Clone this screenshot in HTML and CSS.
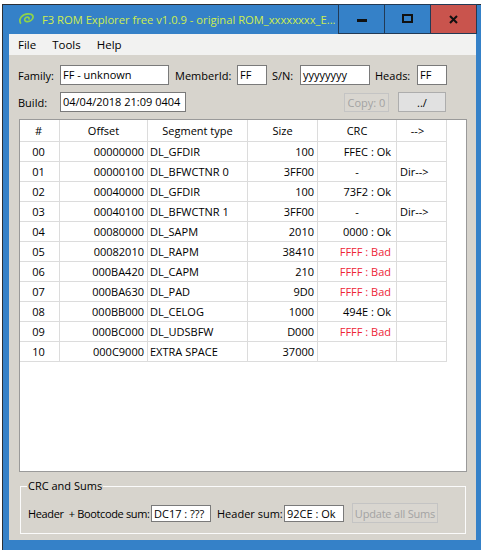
FILE: index.html
```html
<!DOCTYPE html>
<html>
<head>
<meta charset="utf-8">
<link rel="stylesheet" href="styles.css">
</head>
<body>
<div class="window">
  <div class="titlebar">
    <div class="title">
      <svg class="appicon" width="18" height="14" viewBox="0 0 18 14">
        <path d="M2.5 11 C0.5 7 4 2 10 1.8 C15 1.7 16.5 5 13.5 8 C10.5 10.8 5.5 10 7 6.5 C8 4.5 11.5 4.6 11 7" fill="none" stroke="#8fd34a" stroke-width="1.7" stroke-linecap="round"/>
      </svg>
      <span class="title-text">F3 ROM Explorer free v1.0.9 - original ROM_xxxxxxxx_E...</span>
    </div>
    <div class="caption">
      <div class="cbtn"><span class="ic-min"></span></div>
      <div class="cbtn"><span class="ic-max"></span></div>
      <div class="cbtn close">
        <svg width="9" height="9" viewBox="0 0 9 9"><path d="M1 1 L8 8 M8 1 L1 8" stroke="#111" stroke-width="2"/></svg>
      </div>
    </div>
  </div>
  <div class="body">
    <div class="client">
      <div class="menubar">
        <span class="menu-item">File</span>
        <span class="menu-item">Tools</span>
        <span class="menu-item">Help</span>
      </div>
      <div class="content">
        <div class="row">
          <span class="lbl w-family">Family:</span>
          <span class="field w108">FF - unknown</span>
          <span class="lbl w-member">MemberId:</span>
          <span class="field w29">FF</span>
          <span class="lbl w-sn">S/N:</span>
          <span class="field w69">yyyyyyyy</span>
          <span class="lbl w-heads">Heads:</span>
          <span class="field w29">FF</span>
        </div>
        <div class="row">
          <span class="lbl w-family">Build:</span>
          <span class="field w125">04/04/2018 21:09 0404</span>
          <span class="spacer"></span>
          <span class="btn disabled w44">Copy: 0</span>
          <span class="btn w47">../</span>
        </div>
        <div class="grid-box">
          <div class="grow head">
            <div class="c c-num">#</div>
            <div class="c c-off center">Offset</div>
            <div class="c c-seg center">Segment type</div>
            <div class="c c-size center">Size</div>
            <div class="c c-crc center">CRC</div>
            <div class="c c-dir center">--&gt;</div>
          </div>
          <div class="grow"><div class="c c-num">00</div><div class="c c-off">00000000</div><div class="c c-seg">DL_GFDIR</div><div class="c c-size">100</div><div class="c c-crc">FFEC : Ok</div><div class="c c-dir"></div></div>
          <div class="grow"><div class="c c-num">01</div><div class="c c-off">00000100</div><div class="c c-seg">DL_BFWCTNR 0</div><div class="c c-size">3FF00</div><div class="c c-crc center">-</div><div class="c c-dir">Dir--&gt;</div></div>
          <div class="grow"><div class="c c-num">02</div><div class="c c-off">00040000</div><div class="c c-seg">DL_GFDIR</div><div class="c c-size">100</div><div class="c c-crc">73F2 : Ok</div><div class="c c-dir"></div></div>
          <div class="grow"><div class="c c-num">03</div><div class="c c-off">00040100</div><div class="c c-seg">DL_BFWCTNR 1</div><div class="c c-size">3FF00</div><div class="c c-crc center">-</div><div class="c c-dir">Dir--&gt;</div></div>
          <div class="grow"><div class="c c-num">04</div><div class="c c-off">00080000</div><div class="c c-seg">DL_SAPM</div><div class="c c-size">2010</div><div class="c c-crc">0000 : Ok</div><div class="c c-dir"></div></div>
          <div class="grow"><div class="c c-num">05</div><div class="c c-off">00082010</div><div class="c c-seg">DL_RAPM</div><div class="c c-size">38410</div><div class="c c-crc bad">FFFF : Bad</div><div class="c c-dir"></div></div>
          <div class="grow"><div class="c c-num">06</div><div class="c c-off">000BA420</div><div class="c c-seg">DL_CAPM</div><div class="c c-size">210</div><div class="c c-crc bad">FFFF : Bad</div><div class="c c-dir"></div></div>
          <div class="grow"><div class="c c-num">07</div><div class="c c-off">000BA630</div><div class="c c-seg">DL_PAD</div><div class="c c-size">9D0</div><div class="c c-crc bad">FFFF : Bad</div><div class="c c-dir"></div></div>
          <div class="grow"><div class="c c-num">08</div><div class="c c-off">000BB000</div><div class="c c-seg">DL_CELOG</div><div class="c c-size">1000</div><div class="c c-crc">494E : Ok</div><div class="c c-dir"></div></div>
          <div class="grow"><div class="c c-num">09</div><div class="c c-off">000BC000</div><div class="c c-seg">DL_UDSBFW</div><div class="c c-size">D000</div><div class="c c-crc bad">FFFF : Bad</div><div class="c c-dir"></div></div>
          <div class="grow"><div class="c c-num">10</div><div class="c c-off">000C9000</div><div class="c c-seg">EXTRA SPACE</div><div class="c c-size">37000</div><div class="c c-crc"></div><div class="c c-dir"></div></div>
        </div>
        <fieldset class="group">
          <legend>CRC and Sums</legend>
          <div class="grp-row">
            <span class="lbl w-hb">Header&nbsp; + Bootcode sum:</span>
            <span class="field small w59">DC17 : ???</span>
            <span class="lbl w-hs">Header sum:</span>
            <span class="field small w59">92CE : Ok</span>
            <span class="btn disabled w85">Update all Sums</span>
          </div>
        </fieldset>
      </div>
    </div>
  </div>
</div>
</body>
</html>
```
FILE: styles.css
```css
html, body {
  margin: 0;
  padding: 0;
  background: #ffffff;
  overflow: hidden;
}
body {
  font-family: "Open Sans", "Noto Sans", "Liberation Sans", sans-serif;
  font-size: 11px;
  color: #000;
}
.window {
  margin: 4px 0 0 2px;
  width: 479px;
  height: 546px;
  background: #3581c8;
  border-top: 1px solid #2a2f36;
  border-left: 1px solid #2a2f36;
  box-sizing: border-box;
  display: flex;
  flex-direction: column;
}
.titlebar {
  height: 29px;
  display: flex;
  align-items: stretch;
  flex-shrink: 0;
}
.title {
  flex: 1;
  display: flex;
  align-items: center;
  padding-left: 15px;
  gap: 5px;
  min-width: 0;
}
.appicon {
  display: block;
  margin-top: -1px;
  flex-shrink: 0;
}
.title-text {
  color: #cdee4e;
  font-size: 11.2px;
  white-space: nowrap;
  overflow: hidden;
  margin-left: 1px;
}
.caption {
  display: flex;
  align-items: stretch;
  margin-right: 4px;
  flex-shrink: 0;
}
.cbtn {
  width: 46px;
  box-sizing: border-box;
  border-left: 1px solid #223a55;
  border-bottom: 1px solid #223a55;
  margin-top: -1px;
  border-top: 1px solid #223a55;
  display: flex;
  align-items: center;
  justify-content: center;
}
.cbtn.close {
  width: 47px;
  background: #c9544d;
  border-right: 1px solid #223a55;
}
.ic-min {
  width: 10px;
  height: 3px;
  background: #111;
  margin-top: 2px;
}
.ic-max {
  width: 7px;
  height: 5px;
  border: 2px solid #111;
  margin-top: -1px;
}
.body {
  flex: 1;
  display: flex;
  padding: 0 5px 0 6px;
}
.client {
  flex: 1;
  display: flex;
  flex-direction: column;
  background: #d7d4cd;
  height: 506px;
}
.menubar {
  height: 21px;
  background: #f2f2f1;
  display: flex;
  align-items: center;
  padding-left: 1px;
}
.menu-item {
  padding: 0 8px;
  font-size: 11.5px;
}
.content {
  padding: 10px 9px 0 10px;
  display: flex;
  flex-direction: column;
}
.row {
  display: flex;
  align-items: center;
  height: 20px;
  margin-bottom: 7px;
}
.lbl {
  white-space: nowrap;
  flex-shrink: 0;
}
.w-family { width: 42px; margin-left: -1px; }
.w-member { width: 62px; margin-left: 6px; }
.w-sn { width: 28px; margin-left: 5px; }
.w-heads { width: 42px; margin-left: 5px; }
.field {
  height: 20px;
  box-sizing: border-box;
  border: 1px solid #7a7a7a;
  background: #fff;
  padding: 0 2px;
  line-height: 18px;
  white-space: nowrap;
  overflow: hidden;
  flex-shrink: 0;
}
.field.small {
  height: 17px;
  line-height: 15px;
}
.w108 { width: 109px; }
.w29 { width: 30px; }
.w69 { width: 70px; }
.w125 { width: 126px; }
.w59 { width: 60px; }
.spacer { flex: 1; }
.btn {
  height: 20px;
  box-sizing: border-box;
  border: 1px solid #adadad;
  background: #e1e1e1;
  display: flex;
  align-items: center;
  justify-content: center;
  flex-shrink: 0;
  white-space: nowrap;
}
.btn.disabled {
  background: #d9d6d0;
  border-color: #c4c4c4;
  color: #a3a3a3;
}
.w44 { width: 45px; height: 19px; }
.w47 { width: 48px; margin-left: 9px; margin-right: 21px; }
.w85 { width: 86px; margin-left: 8px; letter-spacing: -0.2px; }
.grid-box {
  height: 353px;
  box-sizing: border-box;
  border: 1px solid #9a9a9a;
  background: #fff;
}
.grow {
  display: grid;
  grid-template-columns: 40px 88px 100px 70px 79px 50px;
  height: 20px;
}
.grow.head {
  height: 22px;
}
.c {
  box-sizing: border-box;
  border-right: 1px solid #dcdcdc;
  border-bottom: 1px solid #dcdcdc;
  white-space: nowrap;
  overflow: hidden;
  line-height: 19px;
}
.head .c {
  line-height: 21px;
}
.c-num { text-align: center; padding-right: 2px; }
.c-off { text-align: right; padding-right: 3px; }
.c-seg { text-align: left; padding-left: 2px; }
.c-size { text-align: right; padding-right: 3px; }
.c-crc { text-align: right; padding-right: 5px; }
.c-dir { text-align: left; padding-left: 3px; }
.c.center { text-align: center; padding: 0; }
.head .c-dir { padding-right: 8px; }
.bad { color: #ee2536; }
.group {
  margin: 6px 1px 0 1px;
  padding: 9px 6px 10px 6px;
  border: 1px solid #fbfbfb;
  min-width: 0;
}
.group legend {
  padding: 0 1px;
  line-height: 16px;
}
.grp-row {
  display: flex;
  align-items: center;
  height: 20px;
}
.w-hb { width: 123px; margin-left: 1px; letter-spacing: -0.35px; }
.w-hs { width: 67px; margin-left: 6px; }
```
